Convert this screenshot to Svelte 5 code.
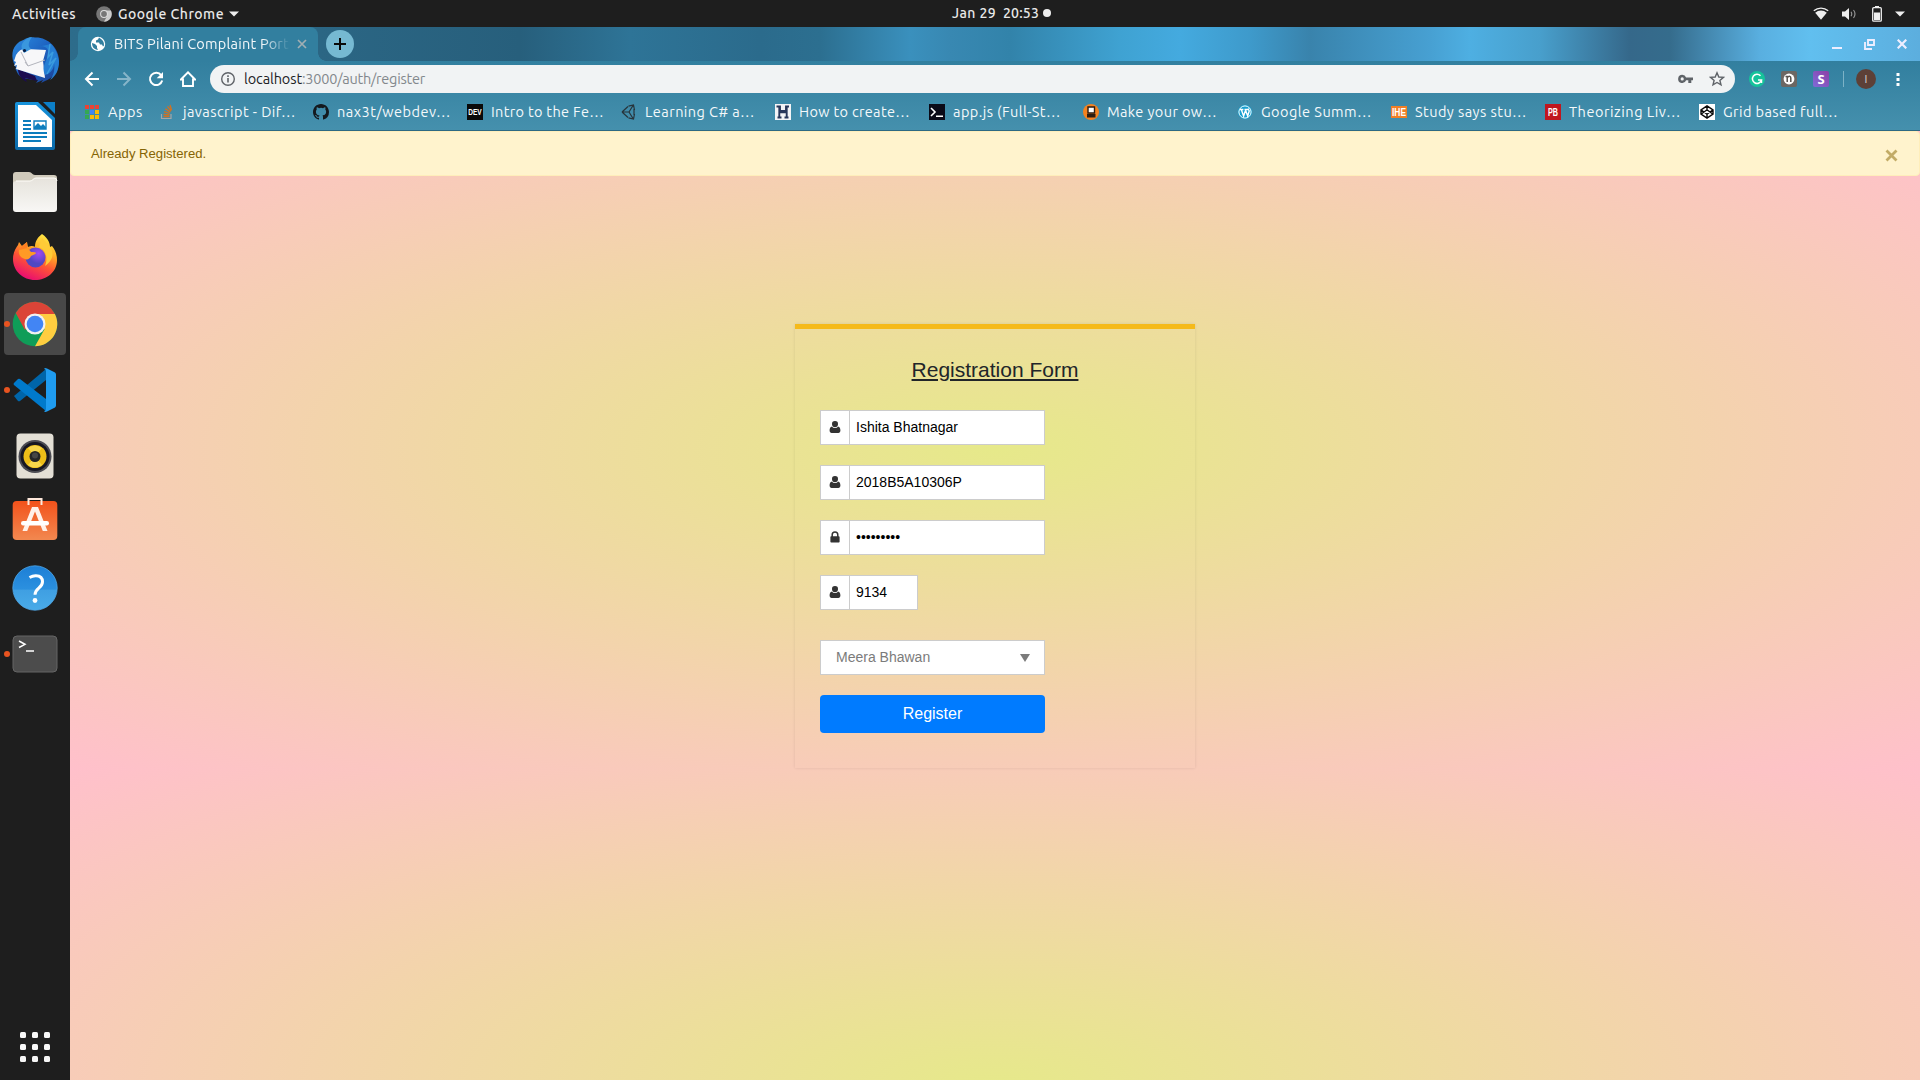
<script>
  const bookmarks = [
    { icon: 'so', label: 'javascript - Dif…', w: 113 },
    { icon: 'github', label: 'nax3t/webdev…', w: 114 },
    { icon: 'dev', label: 'Intro to the Fe…', w: 113 },
    { icon: 'unity', label: 'Learning C# a…', w: 110 },
    { icon: 'h', label: 'How to create…', w: 111 },
    { icon: 'term', label: 'app.js (Full-St…', w: 108 },
    { icon: 'make', label: 'Make your ow…', w: 110 },
    { icon: 'wp', label: 'Google Summ…', w: 111 },
    { icon: 'ihe', label: 'Study says stu…', w: 112 },
    { icon: 'pb', label: 'Theorizing Liv…', w: 112 },
    { icon: 'codepen', label: 'Grid based full…', w: 115 }
  ];
  const dock = [
    { id: 'thunderbird' }, { id: 'writer' }, { id: 'files' }, { id: 'firefox' },
    { id: 'chrome', running: true, active: true }, { id: 'code', running: true },
    { id: 'rhythmbox' }, { id: 'software' }, { id: 'help' }, { id: 'terminal', running: true }
  ];
  const appColors = ['#ea4335', '#ea4335', '#ea4335', '#34a853', '#4285f4', '#fbbc05', '#34a853', '#fbbc05', '#fbbc05'];

  // Tracks the letters so a label fills exactly the given width.
  function fit(el, width) {
    const apply = () => {
      el.style.letterSpacing = '0px';
      const natural = el.getBoundingClientRect().width;
      el.style.letterSpacing = (width - natural) / el.textContent.length + 'px';
    };
    apply();
    document.fonts?.ready.then(apply);
  }
</script>

{#snippet person()}
  <svg width="12" height="14" viewBox="0 0 12 14"><path d="M6 1a3 3 0 0 1 3 3.200C9 6 7.700 7.300 6 7.300S3 6 3 4.200A3 3 0 0 1 6 1zM3 6.600c.8 1 1.800 1.500 3 1.500s2.200-.5 3-1.500c1.700.2 2.400 2 2.400 4 0 1.500-.8 2.400-2 2.400H2.600c-1.200 0-2-.9-2-2.400 0-2 .7-3.800 2.400-4z" fill="#333"/></svg>
{/snippet}

{#snippet badge(text, bg, top, height, size, width, baseline)}
  <svg width="16" height="16" viewBox="0 0 16 16"><rect y={top} width="16" {height} fill={bg}/><text x={(16 - width) / 2} y={baseline} font-family="Liberation Sans, sans-serif" font-weight="700" font-size={size} textLength={width} lengthAdjust="spacingAndGlyphs" fill="#fff">{text}</text></svg>
{/snippet}

<div class="screen">
  <header class="topbar">
    <div class="left">
      <span class="t" use:fit={64}>Activities</span>
      <svg class="gchrome" width="16" height="16" viewBox="0 0 16 16"><circle cx="8" cy="8" r="7.800" fill="#777"/><path d="M8 4.500h6.900A7.800 7.800 0 0 1 8 15.800l3.300-6z" fill="#ccc"/><circle cx="8" cy="8" r="3.900" fill="#ddd"/><circle cx="8" cy="8" r="2.900" fill="#777"/></svg>
      <span class="t" use:fit={106}>Google Chrome</span>
      <svg class="caret" width="10" height="6" viewBox="0 0 10 6"><path d="M0 .5h10L5 5.500z" fill="#eee"/></svg>
    </div>
    <div class="clock"><span class="t" use:fit={44}>Jan 29</span><span class="t" use:fit={36}>20:53</span><i></i></div>
    <div class="status">
      <svg width="16" height="14" viewBox="0 0 16 14"><path d="M.8 3.800a11 11 0 0 1 14.400 0" fill="none" stroke="#eee" stroke-width="1.300"/><path d="M2.200 5.700a9 9 0 0 1 11.600 0L8 12.800z" fill="#eee"/></svg>
      <svg class="vol" width="16" height="14" viewBox="0 0 16 14"><path d="M1 4.500h3L8 1v12L4 9.500H1z" fill="#eee"/><path d="M10 4.800q1.500 2.200 0 4.400M12.500 3q3 4 0 8" fill="none" stroke="#999" stroke-width="1.100"/></svg>
      <svg class="bat" width="10" height="16" viewBox="0 0 10 16"><path d="M3 0h4v2H3z" fill="#eee"/><rect x=".7" y="1.700" width="8.600" height="13.500" rx="1" fill="none" stroke="#eee" stroke-width="1.300"/><path d="M2 6.500h6V14H2z" fill="#eee"/></svg>
      <svg class="down" width="10" height="6" viewBox="0 0 10 6"><path d="M0 .5h10L5 5.500z" fill="#eee"/></svg>
    </div>
  </header>

  <div class="main">
    <nav class="dock">
      {#each dock as app}
        <div class="slot">
          {#if app.running}<i class="dot"></i>{/if}
          <div class="tile" class:active={app.active}>
            {#if app.id === 'thunderbird'}
              <svg width="48" height="48" viewBox="0 0 48 48">
                <defs><linearGradient id="tb" x1="0" y1="0" x2="1" y2="1"><stop offset="0" stop-color="#2b8be0"/><stop offset=".5" stop-color="#1d5fbe"/><stop offset="1" stop-color="#1b3f94"/></linearGradient></defs>
                <path d="M14 3c3-2 7-2 10-1.500C37 1 48 12 48 25c0 9-6 17-14 20l-4 2 2-3-7 3 2-3C14 43 10 42 7 38l-3-6 2 1C0 25 0 14 5 9c3-4 6-4 9-6z" fill="url(#tb)"/>
                <path d="M7 33c0 6 4 11 9 13l-2-4 12 3-2-5z" fill="#1c0c50"/>
                <path d="M5 19c3-5 7-7 11-6l19 1-3 11 2 17L5 33l1-4-3 1 2-4-2-1z" fill="#f7f7f9"/>
                <path d="M10 16l7 14 17-6M17 30l-3-4" fill="none" stroke="#b3b5bd" stroke-width="1"/>
                <path d="M11 13C9 8 14 2 21 1c-3 4-5 9-1 12l-7 4z" fill="#3a97de"/>
                <path d="M26 11c7-2 11 1 12 6l-4 10c-2 4-2 8 0 12 6-2 9-6 9-12 1 6 0 12-4 17 6-4 9-10 9-19-1-7-4-13-8-17z" fill="#257dd3"/>
                <path d="M39 8l-2 13 5-5-4 13 7-7-9 16" fill="none" stroke="#3a9cdf" stroke-width="1.500"/>
                <circle cx="13.500" cy="14.500" r="1.600" fill="#081b42"/>
              </svg>
            {:else if app.id === 'writer'}
              <svg width="40" height="48" viewBox="0 0 40 48"><defs><linearGradient id="wr" x1="0" y1="0" x2="0" y2="1"><stop offset="0" stop-color="#1793dc"/><stop offset="1" stop-color="#0a6aaa"/></linearGradient></defs><path d="M2 0h21l17 16v30a2 2 0 0 1-2 2H2a2 2 0 0 1-2-2V2a2 2 0 0 1 2-2z" fill="url(#wr)"/><path d="M3 3h18l16 15v27H3z" fill="#fff"/><path d="M28 0h12v12z" fill="#0c7fc8"/><path d="M8 19h8M8 23h8M8 27h8M8 31h24M8 35h24M8 39h18" stroke="#0d7dbd" stroke-width="2"/><path d="M19 19h12v8H19z" fill="#fff" stroke="#0d7dbd" stroke-width="1.400"/><path d="M19 27v-2l4-4 3 3 2-2 3 3v2z" fill="#0d7dbd"/></svg>
            {:else if app.id === 'files'}
              <svg width="46" height="42" viewBox="0 0 46 42"><defs><linearGradient id="fl" x1="0" y1="0" x2="0" y2="1"><stop offset="0" stop-color="#e6e3dc"/><stop offset="1" stop-color="#f8f7f5"/></linearGradient></defs><path d="M1 4a3 3 0 0 1 3-3h13c3 0 3 3 6 3h19a3 3 0 0 1 3 3v12H1z" fill="#d0cabb"/><path d="M1 13a3 3 0 0 1 3-3h14c3 0 3-3 6-3h18a3 3 0 0 1 3 3v28a3 3 0 0 1-3 3H4a3 3 0 0 1-3-3z" fill="url(#fl)"/><path d="M4 10h14c3 0 3-3 6-3h18a3 3 0 0 1 3 3" fill="none" stroke="#fffefa"/></svg>
            {:else if app.id === 'firefox'}
              <svg class="lift" width="46" height="48" viewBox="0 0 46 48"><defs><linearGradient id="fx" x1=".8" y1="0" x2=".35" y2="1"><stop offset="0" stop-color="#fff04a"/><stop offset=".35" stop-color="#ffae25"/><stop offset=".62" stop-color="#ff5634"/><stop offset="1" stop-color="#e80b72"/></linearGradient><radialGradient id="fp" cx=".65" cy=".3"><stop offset="0" stop-color="#a348f3"/><stop offset="1" stop-color="#5148c2"/></radialGradient></defs><path d="M30 1c7 5 8 10 8 13l2-1c4 5 5 10 5 14 0 12-10 20-22 20S1 38 1 26c0-7 3-11 5-14l1-3 3 4 5-4 1 5c5-2 7 0 7 0 0-6 3-10 7-13z" fill="url(#fx)"/><path d="M24 14c8-1 13 9 9 19 9-6 9-14 5-19l-8-9-3 9z" fill="#ffcb37"/><circle cx="23.500" cy="24.500" r="10" fill="url(#fp)"/><path d="M7 17c6-4 10-1 12 2 3 0 5 0 5 1s-3 2-5 3c-1 3-4 4-6 3C9 25 6 22 7 17z" fill="#ff9a25"/><path d="M15 9v6l-7 2 2-4z" fill="#ff8022"/></svg>
            {:else if app.id === 'chrome'}
              <svg width="46" height="46" viewBox="0 0 46 46"><circle cx="23" cy="23" r="22.300" fill="#0f9d58"/><path d="M3.700 11.900A22.300 22.300 0 0 1 42.900 13H23L13 29z" fill="#db4437"/><path d="M23 13h19.900A22.300 22.300 0 0 1 23 45.300l9.500-17z" fill="#ffcd40"/><circle cx="23" cy="23" r="10.500" fill="#f1f1f1"/><circle cx="23" cy="23" r="8.300" fill="#4285f4"/></svg>
            {:else if app.id === 'code'}
              <svg width="44" height="44" viewBox="0 0 44 44"><path d="M1 28l4 5q1 .7 2 0L33 12V1z" fill="#0065a9"/><path d="M1 15l4-4q1-.7 2 0l26 20v12L1 17q-1-1 0-2z" fill="#007acc"/><path d="M32 0q1 0 2 .5l8 4q1 .8 1 2v31q0 1.200-1 2l-8 4q-2 1-3-.5 2 0 2-2V3q0-2-2-2z" fill="#1f9cf0"/></svg>
            {:else if app.id === 'rhythmbox'}
              <svg width="38" height="46" viewBox="0 0 38 46"><rect x=".5" y=".5" width="37" height="45" rx="4" fill="#e3dfd5"/><circle cx="19" cy="23.500" r="16.500" fill="#4b4b52"/><circle cx="19" cy="23.500" r="14.500" fill="#171722"/><circle cx="19" cy="23.500" r="11.500" fill="#edbd18"/><path d="M19 23.500L12 15q7-5 14 0zM19 23.500L12 32q7 5 14 0z" fill="#f7d64b"/><circle cx="19" cy="23.500" r="5.500" fill="#252525"/><circle cx="19" cy="22.500" r="3" fill="#454545"/></svg>
            {:else if app.id === 'software'}
              <svg class="soft" width="46" height="44" viewBox="0 0 46 44"><defs><linearGradient id="sw" x1="0" y1="0" x2="0" y2="1"><stop offset="0" stop-color="#f2521b"/><stop offset="1" stop-color="#f28850"/></linearGradient></defs><rect x=".7" y="4" width="44.600" height="39" rx="4" fill="url(#sw)"/><path d="M16.500 8V2h13v6" fill="none" stroke="#ffe9dc" stroke-width="2"/><path d="M20 10h6l9.500 24h-4.700L23 14.500 15.200 34h-4.700z" fill="#fff1e9"/><rect x="9" y="24" width="28" height="4.500" rx="2.200" fill="#fff"/></svg>
            {:else if app.id === 'help'}
              <svg width="46" height="46" viewBox="0 0 46 46"><defs><linearGradient id="hp" x1="0" y1="0" x2="0" y2="1"><stop offset="0" stop-color="#1d7fd6"/><stop offset=".53" stop-color="#2b90df"/><stop offset=".54" stop-color="#3f9fe2"/><stop offset="1" stop-color="#4aabe8"/></linearGradient></defs><circle cx="23" cy="23" r="22.200" fill="url(#hp)" stroke="#4fa6e5" stroke-width=".8"/><path d="M17.500 12.500Q21 10.500 24 10.700q6.500.3 6.500 6c0 6.500-7.500 6.500-7.500 13" fill="none" stroke="#fff" stroke-width="3"/><circle cx="23" cy="35.500" r="2.400" fill="#fff"/></svg>
            {:else}
              <svg width="46" height="38" viewBox="0 0 46 38"><rect x="1" y="1" width="44" height="36" rx="4" fill="#4c4c4c" stroke="#656565"/><path d="M7 6l6 3.300L7 12.500M14 16h8" fill="none" stroke="#fff" stroke-width="1.500"/></svg>
            {/if}
          </div>
        </div>
      {/each}
      <div class="grid">{#each Array(9) as _}<i></i>{/each}</div>
    </nav>

    <section class="browser">
      <div class="tabs">
        <div class="tab">
          <svg width="16" height="16" viewBox="0 0 16 16"><circle cx="8" cy="8" r="7.200" fill="#fff"/><path d="M2 7l3 1 2 2v2l1 2-2-.5Q2 12 2 7zM9 1.500l-1 2-2 1v2h3l1 2h2l1 2 1-1q.5-5-5-8z" fill="#327f9f"/></svg>
          <span class="title"><span use:fit={175}>BITS Pilani Complaint Port</span></span>
          <svg class="x" width="10" height="10" viewBox="0 0 10 10"><path d="M1 1l8 8M9 1L1 9" stroke="#a1aeb3" stroke-width="1.700"/></svg>
        </div>
        <div class="plus"><svg width="12" height="12" viewBox="0 0 12 12"><path d="M6 0v12M0 6h12" stroke="#0a0a0a" stroke-width="2"/></svg></div>
        <div class="wins">
          <svg width="10" height="12" viewBox="0 0 10 12"><path d="M0 10h10" stroke="#eef" stroke-width="2"/></svg>
          <svg width="11" height="11" viewBox="0 0 11 11"><path d="M4 1h6v5H4zM1 3v7h7" fill="none" stroke="#eef" stroke-width="1.900"/></svg>
          <svg width="10" height="10" viewBox="0 0 10 10"><path d="M.7.7l8.600 8.600M9.300.7L.7 9.300" stroke="#eef" stroke-width="2.200"/></svg>
        </div>
      </div>

      <div class="tools">
        <div class="navrow">
          <div class="btns">
            <svg width="16" height="16" viewBox="0 0 16 16"><path d="M15 8H2M8.500 1.500L2 8l6.500 6.500" fill="none" stroke="#fff" stroke-width="2"/></svg>
            <svg width="16" height="16" viewBox="0 0 16 16"><path d="M1 8h13M7.500 1.500L14 8l-6.500 6.500" fill="none" stroke="#86b5c9" stroke-width="2"/></svg>
            <svg width="16" height="16" viewBox="0 0 16 16"><path d="M13.200 4.200A6.200 6.200 0 1 0 14.200 9.500" fill="none" stroke="#fff" stroke-width="2"/><path d="M15 1v6.300H8.700z" fill="#fff"/></svg>
            <svg width="16" height="16" viewBox="0 0 16 16"><path d="M3 15V8.500H.9L8 1.300l7.100 7.200H13V15z" fill="none" stroke="#fff" stroke-width="1.900"/></svg>
          </div>
          <div class="omni">
            <svg width="14" height="14" viewBox="0 0 14 14"><circle cx="7" cy="7" r="6.300" fill="none" stroke="#5f6368" stroke-width="1.400"/><path d="M7 6v4.500M7 3.300v1.600" stroke="#5f6368" stroke-width="1.600"/></svg>
            <span class="url"><b use:fit={58}>localhost</b><span use:fit={123}>:3000/auth/register</span></span>
            <svg class="key" width="15" height="10" viewBox="0 0 15 10"><path d="M4.200.8a4.100 4.100 0 1 0 3.900 5.500h2.200V9h3V6.300H15V3.500H8.100A4.100 4.100 0 0 0 4.200.8zm0 2.500a1.600 1.600 0 1 1 0 3.200 1.600 1.600 0 0 1 0-3.200z" fill="#5f6368"/></svg>
            <svg width="16" height="16" viewBox="0 0 16 16"><path d="M8 1.800l1.800 4.200 4.600.4-3.500 3 1.100 4.500-4-2.400-4 2.400 1.100-4.500-3.500-3L6.200 6z" fill="none" stroke="#5f6368" stroke-width="1.400"/></svg>
          </div>
          <div class="ext">
            <svg width="16" height="16" viewBox="0 0 16 16"><circle cx="8" cy="8" r="8" fill="#15c39a"/><path d="M11.500 4.800A4.600 4.600 0 1 0 12.500 9H9M12.500 8.500v3.500" fill="none" stroke="#fff" stroke-width="1.500"/></svg>
            <svg width="16" height="16" viewBox="0 0 16 16"><rect width="16" height="16" rx="2" fill="#6c6763"/><circle cx="8" cy="8" r="5.400" fill="#fff"/><path d="M4.500 5.500H6.200V11M6.200 6.500Q9.800 4 9.800 7v4" fill="none" stroke="#57524e" stroke-width="1.500"/></svg>
            <span class="s">S</span>
            <i class="sep"></i>
            <span class="avatar">I</span>
            <svg class="dots" width="4" height="14" viewBox="0 0 4 14"><path d="M.5 1h3v3h-3zM.5 6h3v3h-3zM.5 11h3v3h-3z" fill="#fff"/></svg>
          </div>
        </div>
        <div class="bookmarks">
          <div class="bm apps">
            <span class="ic"><span class="appgrid">{#each appColors as c}<i style:background={c}></i>{/each}</span></span>
            <span class="lbl" use:fit={35}>Apps</span>
          </div>
          {#each bookmarks as b}
            <div class="bm">
              <span class="ic">
                {#if b.icon === 'so'}
                  <svg width="16" height="16" viewBox="0 0 16 16"><path d="M2.500 10v4.500h9.500V10" fill="none" stroke="#a6a6a6" stroke-width="1.200"/><path d="M4.500 12.500h6M4.500 10.300l6 .6M5 7.700l5.700 1.800M6.300 4.800l5 3.300M8.500 2.300l3.700 4.700M11 1l1.500 5" stroke="#d4711e" stroke-width="1.300"/></svg>
                {:else if b.icon === 'github'}
                  <svg width="16" height="16" viewBox="0 0 16 16"><path fill="#14191e" d="M8 0C3.580 0 0 3.580 0 8c0 3.540 2.290 6.530 5.470 7.590.4.070.55-.17.55-.38 0-.19-.01-.82-.01-1.490-2.010.37-2.530-.49-2.690-.94-.09-.23-.48-.94-.82-1.130-.28-.15-.68-.52-.01-.53.63-.01 1.080.58 1.230.82.72 1.210 1.870.87 2.330.66.070-.52.280-.87.510-1.070-1.780-.2-3.640-.89-3.640-3.950 0-.87.310-1.590.82-2.150-.08-.2-.36-1.020.080-2.120 0 0 .67-.21 2.200.82a7.600 7.600 0 0 1 4 0c1.530-1.040 2.200-.82 2.200-.82.440 1.100.160 1.920.080 2.120.51.560.82 1.270.82 2.150 0 3.070-1.870 3.750-3.650 3.950.29.250.54.730.54 1.480 0 1.070-.01 1.930-.01 2.200 0 .21.150.46.55.38A8 8 0 0 0 16 8c0-4.420-3.580-8-8-8z"/></svg>
                {:else if b.icon === 'dev'}
                  {@render badge('DEV', '#0a0a0a', 0, 16, 9.5, 13.5, 11.4)}
                {:else if b.icon === 'unity'}
                  <svg width="16" height="16" viewBox="0 0 16 16"><path d="M1 8l6-5.500M1 8l6 5.500M7.500 2.200l5-1.200 1 5M7.500 13.800l5 1.200 1-5M1 8h7L12 1.500M8 8l4 6.500M13 5v6" fill="none" stroke="#27343b" stroke-width="1.200"/></svg>
                {:else if b.icon === 'h'}
                  <svg width="16" height="16" viewBox="0 0 16 16"><path d="M0 0h16v16H0z" fill="#f3f4f6"/><path d="M1.500 2.500H5V7h6V2.500h3M4.300 2.500v11M11.700 2.500v11M5 8.200h6M2.500 13.500h4M9.500 13.500h4" fill="none" stroke="#28375a" stroke-width="1.900"/></svg>
                {:else if b.icon === 'term'}
                  <svg width="16" height="16" viewBox="0 0 16 16"><path d="M0 0h16v16H0z" fill="#0a0a17"/><path d="M2 4l4 4-4 4M7 12.200h7" fill="none" stroke="#fff" stroke-width="1.600"/></svg>
                {:else if b.icon === 'make'}
                  <svg width="16" height="16" viewBox="0 0 16 16"><circle cx="8" cy="8" r="8" fill="#f58220"/><path d="M5 3h6.500v6H5z" fill="#fff" stroke="#2d1d12" stroke-width="1.400"/><path d="M4 10h8.500v3.500H4z" fill="#2d1d12"/></svg>
                {:else if b.icon === 'wp'}
                  <svg width="16" height="16" viewBox="0 0 16 16"><circle cx="8" cy="8" r="6.700" fill="#169fd0" stroke="#0e9fd0" stroke-width="1"/><circle cx="8" cy="8" r="6.100" fill="none" stroke="#fff" stroke-width="1"/><path d="M3 5.500h3.400M7.500 5.500h3.300M4.300 5.500l2.300 6.500L8.300 7M8.300 5.500l2.400 6.500 1.500-5-1.200-2.500" fill="none" stroke="#fff" stroke-width="1.400"/></svg>
                {:else if b.icon === 'ihe'}
                  {@render badge('IHE', '#f07f26', 2, 12, 11, 14, 12)}
                {:else if b.icon === 'pb'}
                  {@render badge('PB', '#c0161e', 0, 16, 11, 10, 12)}
                {:else}
                  <svg width="16" height="16" viewBox="0 0 16 16"><path d="M0 0h16v16H0z" fill="#fff"/><path d="M8 1.800l6 4v4.400l-6 4-6-4V5.800zM8 1.800v4M8 10.200v4M2 5.800l6 4.400 6-4.400M2 10.200l6-4.400 6 4.400" fill="none" stroke="#0b0b0b" stroke-width="1.400"/></svg>
                {/if}
              </span>
              <span class="lbl" use:fit={b.w}>{b.label}</span>
            </div>
          {/each}
        </div>
      </div>

      <div class="page">
        <div class="alert">
          <span>Already Registered.</span>
          <svg width="13" height="13" viewBox="0 0 13 13"><path d="M1.500 1.500l10 10M11.500 1.500l-10 10" stroke="#c2ab66" stroke-width="2.800"/></svg>
        </div>
        <form class="card">
          <h2>Registration Form</h2>
          <div class="field"><span class="fi">{@render person()}</span><span class="val">Ishita Bhatnagar</span></div>
          <div class="field"><span class="fi">{@render person()}</span><span class="val">2018B5A10306P</span></div>
          <div class="field"><span class="fi"><svg width="10" height="12" viewBox="0 0 10 12"><path d="M2.200 6V3.700a2.800 2.800 0 0 1 5.600 0V6" fill="none" stroke="#333" stroke-width="1.500"/><rect x=".4" y="5.300" width="9.200" height="6.200" rx=".8" fill="#333"/></svg></span><span class="val">•••••••••</span></div>
          <div class="field short"><span class="fi">{@render person()}</span><span class="val">9134</span></div>
          <div class="select"><span>Meera Bhawan</span><svg width="10" height="8" viewBox="0 0 10 8"><path d="M0 0h10L5 8z" fill="#7b7b7b"/></svg></div>
          <button type="button">Register</button>
        </form>
      </div>
    </section>
  </div>
</div>

<style>
  :global(body) { margin: 0; overflow: hidden; }
  .screen { width: 1920px; height: 1080px; display: flex; flex-direction: column; overflow: hidden; background: #1e1e1e; font-family: Ubuntu, "Noto Sans", "Open Sans", sans-serif; }
  .screen * { box-sizing: border-box; }
  svg { display: block; flex: none; }
  span { white-space: nowrap; }
  .t, .lbl, .title span, .url > * { display: inline-block; flex: none; }

  .topbar { height: 27px; flex: none; display: grid; grid-template-columns: 952px auto 1fr; align-items: center; color: #e9e9e9; font-size: 14px; font-weight: 500; line-height: 26px; }
  .left { display: flex; align-items: center; padding-left: 12px; height: 27px; }
  .gchrome { margin: 0 6px 0 20px; }
  .caret { margin-left: 5px; }
  .clock { display: flex; align-items: center; gap: 7px; margin-top: -1px; }
  .clock .t { white-space: pre; }
  .clock i { width: 8px; height: 8px; border-radius: 4px; background: #eee; margin-left: -3px; }
  .status { display: flex; align-items: center; justify-content: flex-end; padding-right: 15px; }
  .vol { margin-left: 12px; }
  .bat { margin-left: 15px; }
  .down { margin-left: 13px; }

  .main { flex: 1; display: flex; min-height: 0; }
  .dock { width: 70px; flex: none; display: flex; flex-direction: column; background: #1e1e1e; }
  .slot { height: 66px; flex: none; position: relative; display: flex; align-items: center; justify-content: center; }
  .dot { position: absolute; left: 4px; top: 30px; width: 6px; height: 6px; border-radius: 3px; background: #e95420; }
  .tile { width: 62px; height: 62px; display: flex; align-items: center; justify-content: center; border-radius: 4px; }
  .tile.active { background: #484848; }
  .lift { margin-bottom: 2px; }
  .soft { margin-bottom: 6px; }
  .grid { margin: auto 0 18px 20px; display: grid; grid-template-columns: repeat(3, 6px); gap: 6px; }
  .grid i { height: 6px; background: #f7f7f7; border-radius: 1.5px; }

  .browser { flex: 1; min-width: 0; display: flex; flex-direction: column; }
  .tabs { height: 34px; flex: none; display: flex; align-items: center; padding-left: 8px; background: linear-gradient(90deg, #2d6c8b 0, #2b6684 250px, #275f7c 450px, #2e7497 560px, #2b6b8c 690px, #2c6f90 750px, #3a90bd 840px, #3888b2 880px, #3283aa 940px, #3fa2d2 1050px, #44aadf 1110px, #3e9acb 1180px, #3983ac 1240px, #47a0d2 1360px, #4eafe2 1400px, #489fcc 1470px, #35688a 1560px, #356c8c 1600px, #59afe0 1690px, #61bfef 1740px, #5caede 1850px); }
  .tab { width: 240px; height: 34px; background: #327f9f; border-radius: 8px 8px 0 0; display: flex; align-items: center; padding-left: 12px; position: relative; }
  .tab::before, .tab::after { content: ""; position: absolute; bottom: 0; width: 8px; height: 8px; }
  .tab::before { left: -8px; background: radial-gradient(circle at 0 0, transparent 7.500px, #327f9f 8px); }
  .tab::after { right: -8px; background: radial-gradient(circle at 100% 0, transparent 7.500px, #327f9f 8px); }
  .title { width: 176px; margin-left: 8px; color: #f3f8fa; font-size: 14.500px; line-height: 20px; -webkit-mask-image: linear-gradient(90deg, #000 148px, transparent 176px); mask-image: linear-gradient(90deg, #000 148px, transparent 176px); }
  .x { margin-left: 7px; }
  .plus { width: 28px; height: 28px; margin-left: 8px; border-radius: 14px; background: #76b9d2; display: flex; align-items: center; justify-content: center; }
  .wins { margin-left: auto; display: flex; align-items: center; gap: 22px; padding-right: 13px; }

  .tools { height: 70px; flex: none; background: linear-gradient(#327f9f, #4590ad); border-bottom: 1px solid #2d6983; display: flex; flex-direction: column; }
  .navrow { height: 36px; display: flex; align-items: center; }
  .btns { width: 140px; flex: none; display: flex; gap: 16px; padding-left: 14px; }
  .omni { width: 1525px; height: 28px; border-radius: 14px; background: #f1f3f4; display: flex; align-items: center; padding: 0 10px 0 11px; }
  .url { margin-left: 9px; margin-right: auto; font-size: 14.500px; line-height: 20px; color: #83888c; }
  .url b { font-weight: 400; color: #202124; }
  .key { margin-right: 16px; }
  .ext { display: flex; align-items: center; padding-left: 14px; }
  .ext > svg:nth-child(2) { margin: 0 16px; }
  .s { width: 16px; height: 16px; border-radius: 2px; background: linear-gradient(45deg, #7e6bd8, #8e3fa6); color: #fff; font: 700 13px/16px "Noto Sans", sans-serif; text-align: center; }
  .sep { width: 1px; height: 16px; background: #7db2c6; margin: 0 12px 0 14px; }
  .avatar { width: 20px; height: 20px; border-radius: 10px; background: #5d4037; color: #ddd; font-size: 11px; line-height: 20px; text-align: center; }
  .ext > .dots { margin-left: 20px; }

  .bookmarks { display: flex; align-items: center; height: 30px; padding-left: 14px; }
  .bm { width: 154px; flex: none; display: flex; align-items: center; gap: 8px; color: #f4f9fb; font-size: 14.500px; line-height: 20px; }
  .bm.apps { width: 75px; }
  .ic { width: 16px; height: 16px; flex: none; }
  .appgrid { display: grid; grid-template-columns: repeat(3, 4px); gap: 1px; padding: 1px; }
  .appgrid i { height: 4px; }

  .page { flex: 1; background: radial-gradient(#e6e98a, #ffc0cb) 0 0 / 100% 638px repeat-y; font-family: "Liberation Sans", Arial, sans-serif; }
  .alert { height: 45px; border: 1px solid #ffeeba; border-radius: 4px; background: #fff3cd; color: #856404; font-size: 13.120px; display: flex; align-items: center; justify-content: space-between; padding: 0 21px 0 20px; }
  .alert svg { margin-top: 4px; }
  .card { width: 400px; height: 444px; margin: 148px auto 0; border-top: 5px solid #f5ba1a; padding: 25px; box-shadow: 0 0 3px rgba(0, 0, 0, .1); display: flex; flex-direction: column; align-items: flex-start; }
  h2 { margin: 3px 0 27px; align-self: center; font-size: 21px; line-height: 26px; font-weight: 400; color: #212529; text-decoration: underline; }
  .field { width: 225px; height: 35px; flex: none; margin-bottom: 20px; border: 1px solid #ccc; background: #fff; display: flex; }
  .short { width: 98px; margin-bottom: 30px; }
  .fi { width: 29px; border-right: 1px solid #ccc; display: flex; align-items: center; justify-content: center; padding: 0 1px 2px 0; }
  .val { padding-left: 6px; font-size: 14px; line-height: 33px; color: #000; }
  .select { width: 225px; height: 35px; flex: none; border: 1px solid #ccc; background: #fff; display: flex; align-items: center; justify-content: space-between; padding: 0 14px 0 15px; font-size: 14px; color: #7b7b7b; }
  .select span { margin-top: -2px; }
  button { width: 225px; height: 38px; flex: none; margin-top: 20px; padding: 0; border: 0; border-radius: 4px; background: #007bff; color: #fff; font: 16px "Liberation Sans", Arial, sans-serif; }
</style>
